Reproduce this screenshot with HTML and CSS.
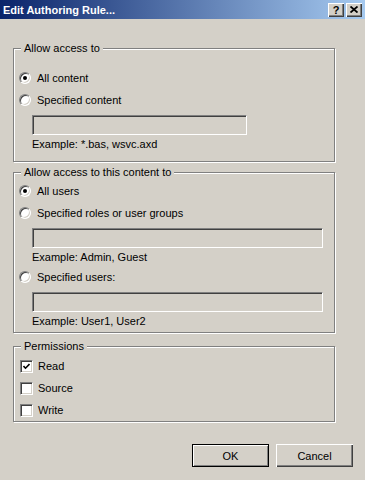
FILE: index.html
```html
<!DOCTYPE html>
<html lang="en">

<head>
    <meta charset="UTF-8">
    <meta name="viewport" content="width=device-width, initial-scale=1.0">
    <title>Edit Authoring Rule</title>
    <link rel="stylesheet" href="styles.css">
</head>

<body>
    <div class="dialog">

        <div class="titlebar">
            <span class="title">Edit Authoring Rule...</span>
            <div class="caption-buttons">
                <span class="cap-btn help">?</span>
                <span class="cap-btn close">
                    <svg width="8" height="7" viewBox="0 0 8 7">
                        <path d="M0.5 0.5 L7.5 6.5 M7.5 0.5 L0.5 6.5" stroke="#000" stroke-width="1.8" fill="none" />
                    </svg>
                </span>
            </div>
        </div>

        <div class="content">

            <div class="group group-content">
                <span class="group-label">Allow access to</span>
                <div class="option"><span class="radio checked"></span>All content</div>
                <div class="option"><span class="radio"></span>Specified content</div>
                <div class="field short"></div>
                <div class="hint">Example: *.bas, wsvc.axd</div>
            </div>

            <div class="group group-users">
                <span class="group-label">Allow access to this content to</span>
                <div class="option"><span class="radio checked"></span>All users</div>
                <div class="option"><span class="radio"></span>Specified roles or user groups</div>
                <div class="field"></div>
                <div class="hint">Example: Admin, Guest</div>
                <div class="option"><span class="radio"></span>Specified users:</div>
                <div class="field"></div>
                <div class="hint">Example: User1, User2</div>
            </div>

            <div class="group group-perms">
                <span class="group-label">Permissions</span>
                <div class="option">
                    <span class="checkbox">
                        <svg width="7" height="7" viewBox="0 0 7 7">
                            <polyline points="0.5,3 2.5,5.2 6.5,1" stroke="#000" stroke-width="1.6" fill="none" />
                        </svg>
                    </span>Read
                </div>
                <div class="option"><span class="checkbox"></span>Source</div>
                <div class="option"><span class="checkbox"></span>Write</div>
            </div>

        </div>

        <div class="buttons">
            <button class="btn default">OK</button>
            <button class="btn">Cancel</button>
        </div>

    </div>
</body>

</html>
```

FILE: styles.css
```css
body {
    margin: 0;
    background: #d4d0c8;
    font-family: "Liberation Sans", Arial, sans-serif;
    font-size: 11px;
    color: #000;
}

.dialog {
    width: 365px;
    height: 480px;
    background: #d4d0c8;
}

.titlebar {
    height: 19px;
    display: flex;
    align-items: center;
    justify-content: space-between;
    padding: 0 3px;
    background: linear-gradient(to right, #0a246a, #a6caf0);
}

.title {
    color: #fff;
    font-weight: bold;
    font-size: 11px;
}

.caption-buttons {
    display: flex;
    gap: 2px;
}

.cap-btn {
    width: 16px;
    height: 14px;
    box-sizing: border-box;
    display: flex;
    align-items: center;
    justify-content: center;
    background: #d4d0c8;
    box-shadow: inset 1px 1px 0 #fff, inset -1px -1px 0 #404040, inset -2px -2px 0 #808080;
    font-weight: bold;
    font-size: 11px;
}

.content {
    padding-left: 13px;
}

.group {
    position: relative;
    width: 322px;
    box-sizing: border-box;
    border: 1px solid #808080;
    box-shadow: 1px 1px 0 #fff, inset 1px 1px 0 #fff;
    padding-left: 5px;
}

.group-label {
    position: absolute;
    top: -7px;
    left: 7px;
    padding: 0 3px;
    line-height: 13px;
    background: #d4d0c8;
}

.group-content {
    margin-top: 29px;
    padding-top: 21px;
    padding-bottom: 10px;
}

.group-users {
    margin-top: 10px;
    padding-top: 10px;
    padding-bottom: 4px;
}

.group-perms {
    margin-top: 13px;
    padding-top: 11px;
    padding-bottom: 3px;
}

.option {
    height: 16px;
    display: flex;
    align-items: center;
    gap: 6px;
}

.option + .option {
    margin-top: 6px;
}

.hint + .option {
    margin-top: 5px;
}

.radio {
    width: 12px;
    height: 12px;
    box-sizing: border-box;
    border-radius: 50%;
    background: #fff;
    border: 1px solid;
    border-color: #808080 #fff #fff #808080;
    box-shadow: inset 1px 1px 0 #404040, inset -1px -1px 0 #d4d0c8;
    position: relative;
}

.radio.checked::after {
    content: "";
    position: absolute;
    left: 3px;
    top: 3px;
    width: 4px;
    height: 4px;
    border-radius: 50%;
    background: #000;
}

.checkbox {
    width: 13px;
    height: 13px;
    box-sizing: border-box;
    margin-left: 1px;
    margin-right: -1px;
    background: #fff;
    border: 1px solid;
    border-color: #808080 #fff #fff #808080;
    box-shadow: inset 1px 1px 0 #404040, inset -1px -1px 0 #d4d0c8;
    display: flex;
    align-items: center;
    justify-content: center;
}

.field {
    width: 291px;
    height: 20px;
    box-sizing: border-box;
    margin-top: 7px;
    margin-left: 13px;
    border: 1px solid;
    border-color: #808080 #fff #fff #808080;
    box-shadow: inset 1px 1px 0 #404040, inset -1px -1px 0 #d4d0c8;
    background: #d4d0c8;
}

.field.short {
    width: 215px;
}

.hint {
    margin-top: 3px;
    margin-left: 13px;
    line-height: 13px;
}

.buttons {
    display: flex;
    justify-content: flex-end;
    gap: 7px;
    margin-top: 22px;
    padding-right: 12px;
}

.btn {
    width: 77px;
    height: 23px;
    border: none;
    background: #d4d0c8;
    font-family: "Liberation Sans", Arial, sans-serif;
    font-size: 11px;
    color: #000;
    box-shadow: inset 1px 1px 0 #fff, inset -1px -1px 0 #404040, inset -2px -2px 0 #808080;
}

.btn.default {
    border: 1px solid #000;
    box-shadow: inset 1px 1px 0 #fff, inset -1px -1px 0 #808080;
}
```
